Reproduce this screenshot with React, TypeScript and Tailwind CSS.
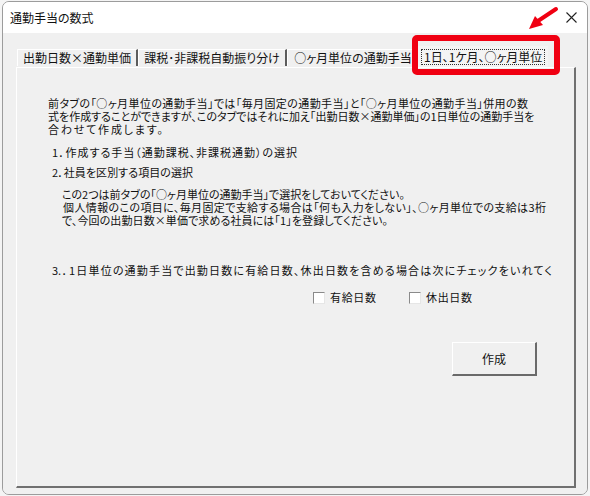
import React from "react";

const jp = "font-['Noto_Sans_CJK_JP',sans-serif]";
const palt = "[font-feature-settings:'palt']";
const fit = "whitespace-nowrap [text-align-last:justify] leading-[13px]";

function Tab({ label, width, last }: { label: string; width: string; last?: boolean }) {
  return (
    <div
      className={`flex h-[17px] items-center justify-center border-l border-t border-white ${width} ${
        last ? "" : "border-r-2 border-r-[#5c5c5c]"
      }`}
    >
      <span className="whitespace-nowrap text-[12px] leading-[12px]">{label}</span>
    </div>
  );
}

function Checkbox({ label }: { label: string }) {
  return (
    <label className="flex items-center gap-[5px]">
      <span className="h-[12px] w-[12px] border border-b-[#e6e6e6] border-l-[#8a8a8a] border-r-[#e6e6e6] border-t-[#8a8a8a] bg-white" />
      <span className={`${fit} w-[46px]`}>{label}</span>
    </label>
  );
}

export default function App() {
  return (
    <div className={`relative h-[496px] w-[590px] overflow-hidden bg-[#f4f4f4] text-[#111] ${jp} ${palt}`}>
      <div className="ml-[2px] mt-[1px] flex h-[494px] w-[586px] flex-col overflow-hidden rounded-[7px] border border-[#9c9c9c]">
        {/* title bar */}
        <div className="flex h-[31px] items-center justify-between bg-white pl-[7px] pr-[10px]">
          <span className="text-[12px] leading-[12px]">通勤手当の数式</span>
          <svg width="11" height="11" viewBox="0 0 11 11" className="mb-[1px]">
            <path d="M0.5 0.5 L10.5 10.5 M10.5 0.5 L0.5 10.5" stroke="#222" strokeWidth="1.1" fill="none" />
          </svg>
        </div>

        {/* body */}
        <div className="flex flex-1 flex-col bg-[#f0f0f0] pb-[6px] pl-[13px] pr-[11px] pt-[16px]">
          <div className="flex pl-[1px]">
            <Tab label="出勤日数×通勤単価" width="w-[121px]" />
            <Tab label="課税･非課税自動振り分け" width="w-[149px]" />
            <Tab label="○ヶ月単位の通勤手当" width="w-[131px]" last />
            <div className="relative z-10 -mt-[3px] flex h-[21px] w-[130px] items-center justify-center bg-[#f4f4f4]">
              <span className="border border-dotted border-[#333] px-[2px]">
                <span className="block w-[118px] whitespace-nowrap text-[12px] leading-[14px] [text-align-last:justify]">
                  1日、1ケ月、○ヶ月単位
                </span>
              </span>
            </div>
          </div>

          <div className="flex flex-1 flex-col border-b-2 border-l border-r-2 border-t border-b-[#707070] border-l-white border-r-[#707070] border-t-white pl-[31px] pt-[29px] text-[11px]">
            <div className="flex flex-col">
              <p className={`${fit} w-[480px]`}>
                前タブの「○ヶ月単位の通勤手当」では「毎月固定の通勤手当」と「○ヶ月単位の通勤手当」併用の数
              </p>
              <p className={`${fit} w-[480px]`}>
                式を作成することができますが、このタブではそれに加え「出勤日数×通勤単価」の1日単位の通勤手当を
              </p>
              <p className={`${fit} w-[115px]`}>合わせて作成します。</p>
            </div>

            <p className={`${fit} ml-[4px] mt-[10px] w-[245px]`}>1．作成する手当（通勤課税、非課税通勤）の選択</p>
            <p className={`${fit} ml-[4px] mt-[7px] w-[141px]`}>2．社員を区別する項目の選択</p>

            <div className="ml-[14px] mt-[9px] flex flex-col">
              <p className={`${fit} w-[335px]`}>この2つは前タブの「○ヶ月単位の通勤手当」で選択をしておいてください。</p>
              <p className={`${fit} ml-[1px] w-[483px]`}>
                個人情報のこの項目に、毎月固定で支給する場合は「何も入力をしない」、○ヶ月単位での支給は3桁
              </p>
              <p className={`${fit} w-[326px]`}>で、今回の出勤日数×単価で求める社員には「1」を登録してください。</p>
            </div>

            <p className={`${fit} ml-[4px] mt-[37px] w-[500px]`}>
              3.．1日単位の通勤手当で出勤日数に有給日数、休出日数を含める場合は次にチェックをいれてく
            </p>

            <div className="ml-[265px] mt-[14px] flex gap-[33px]">
              <Checkbox label="有給日数" />
              <Checkbox label="休出日数" />
            </div>

            <button className="ml-[404px] mt-[38px] flex h-[34px] w-[85px] items-center justify-center border-b-2 border-l border-r-2 border-t border-b-[#6a6a6a] border-l-white border-r-[#6a6a6a] border-t-white bg-[#f0f0f0] text-[12px]">
              作成
            </button>
          </div>
        </div>
      </div>

      {/* red annotation */}
      <div className="absolute left-[412px] top-[35px] z-20 h-[40px] w-[148px] rounded-[5px] border-[6px] border-[#f00012]" />
      <svg className="absolute left-[526px] top-[6px] z-20" width="34" height="26" viewBox="0 0 34 26">
        <path d="M30 3 L12 15" stroke="#f00012" strokeWidth="4" strokeLinecap="round" />
        <path d="M3 23 L9 10 L17 19 Z" fill="#f00012" />
      </svg>
    </div>
  );
}
